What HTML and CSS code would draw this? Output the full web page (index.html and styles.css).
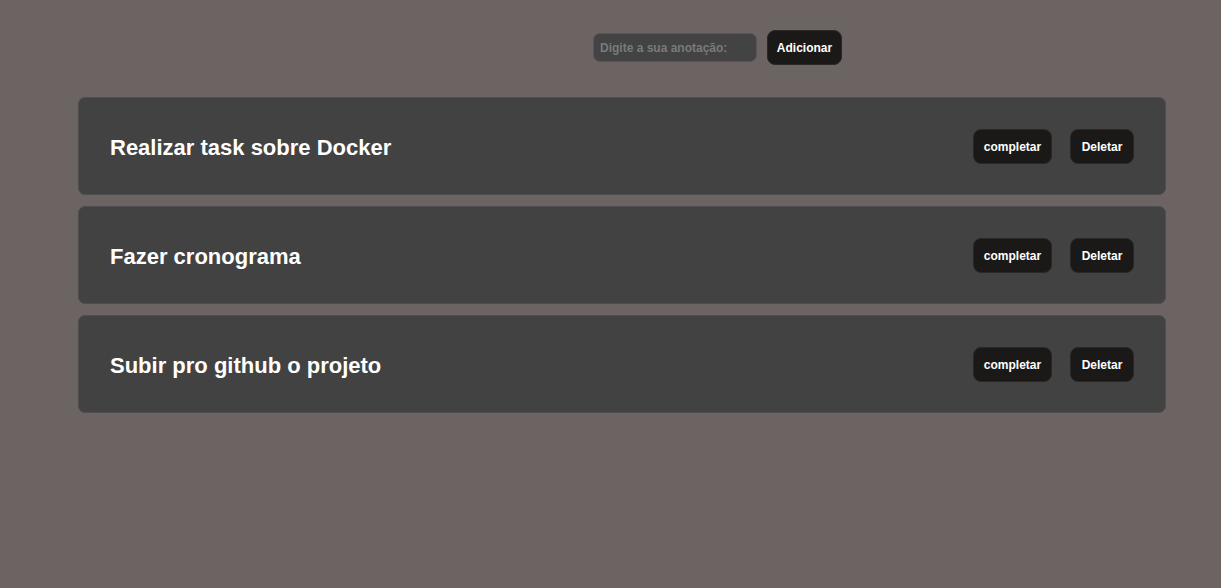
FILE: index.html
```html
<!DOCTYPE html>
<html lang="pt-BR">
<head>
<meta charset="utf-8">
<title>Anotações</title>
<link rel="stylesheet" href="styles.css">
</head>
<body>
<header class="form">
  <input class="field" type="text" placeholder="Digite a sua anotação:">
  <button class="btn btn-add">Adicionar</button>
</header>
<main class="list">
  <div class="card">
    <h2 class="title">Realizar task sobre Docker</h2>
    <div class="actions">
      <button class="btn btn-complete">completar</button>
      <button class="btn btn-delete">Deletar</button>
    </div>
  </div>
  <div class="card">
    <h2 class="title">Fazer cronograma</h2>
    <div class="actions">
      <button class="btn btn-complete">completar</button>
      <button class="btn btn-delete">Deletar</button>
    </div>
  </div>
  <div class="card">
    <h2 class="title">Subir pro github o projeto</h2>
    <div class="actions">
      <button class="btn btn-complete">completar</button>
      <button class="btn btn-delete">Deletar</button>
    </div>
  </div>
</main>
</body>
</html>
```
FILE: styles.css
```css
html, body {
  margin: 0;
  padding: 0;
}
body {
  background: #6b6463;
  font-family: "Liberation Sans", Arial, sans-serif;
  color: #fff;
  min-height: 588px;
}
.form {
  display: flex;
  align-items: center;
  gap: 10px;
  padding: 30px 0 0 593px;
  height: 35px;
}
.field {
  box-sizing: border-box;
  width: 164px;
  height: 29px;
  border: 1px solid #555;
  border-radius: 7px;
  background: #434343;
  padding: 0 6px;
  font-family: inherit;
  font-weight: 700;
  font-size: 12px;
  color: #ddd;
  outline: none;
}
.field::placeholder {
  color: #7a7a7a;
}
.btn {
  box-sizing: border-box;
  background: #1b1918;
  color: #fff;
  border: 1px solid #2a2727;
  border-radius: 8px;
  font-family: inherit;
  font-weight: 700;
  font-size: 12px;
  cursor: pointer;
  padding: 1px 0 0;
}
.btn-add {
  width: 75px;
  height: 35px;
}
.list {
  display: flex;
  flex-direction: column;
  gap: 11px;
  margin: 32px 55px 0 78px;
}
.card {
  box-sizing: border-box;
  height: 98px;
  display: flex;
  align-items: center;
  justify-content: space-between;
  background: #424242;
  border: 1px solid #4e4e4e;
  border-radius: 7px;
  padding: 1px 31px 0 31px;
}
.title {
  margin: 0;
  padding-top: 2px;
  font-size: 22px;
  font-weight: 700;
}
.actions {
  display: flex;
  gap: 18px;
}
.btn-complete {
  width: 79px;
  height: 35px;
}
.btn-delete {
  width: 64px;
  height: 35px;
}
```
